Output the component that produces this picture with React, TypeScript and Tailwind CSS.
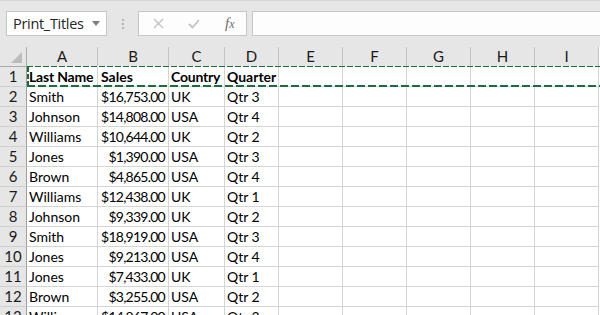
import React from "react";

const cols = ["A", "B", "C", "D", "E", "F", "G", "H", "I"];

const rows: [string, string, string, string][] = [
  ["Last Name", "Sales", "Country", "Quarter"],
  ["Smith", "$16,753.00", "UK", "Qtr 3"],
  ["Johnson", "$14,808.00", "USA", "Qtr 4"],
  ["Williams", "$10,644.00", "UK", "Qtr 2"],
  ["Jones", "$1,390.00", "USA", "Qtr 3"],
  ["Brown", "$4,865.00", "USA", "Qtr 4"],
  ["Williams", "$12,438.00", "UK", "Qtr 1"],
  ["Johnson", "$9,339.00", "UK", "Qtr 2"],
  ["Smith", "$18,919.00", "USA", "Qtr 3"],
  ["Jones", "$9,213.00", "USA", "Qtr 4"],
  ["Jones", "$7,433.00", "UK", "Qtr 1"],
  ["Brown", "$3,255.00", "USA", "Qtr 2"],
  ["Williams", "$14,867.00", "USA", "Qtr 3"],
];

const grid =
  "grid grid-cols-[27px_71px_71px_56px_54px_64px_64px_64px_64px_64px]";

function Toolbar() {
  return (
    <div className="h-[47px] bg-[#e6e6e6] border-t border-[#d4d4d4] flex items-start pt-[10px] pl-[6px]">
      {/* name box */}
      <div className="w-[101px] h-[25px] bg-white border border-[#c6c6c6] flex items-center pl-[6px] pr-[6px] justify-between">
        <span className="text-[14.5px] text-[#262626] font-['Open_Sans',sans-serif] tracking-[-0.3px]">
          Print_Titles
        </span>
        <svg width="8" height="5" viewBox="0 0 8 5">
          <path d="M0 0h8L4 5z" fill="#7f7f7f" />
        </svg>
      </div>
      {/* grip dots */}
      <div className="w-[31px] h-[25px] flex flex-col items-center justify-center gap-[2px]">
        <div className="w-[2px] h-[2px] bg-[#b4b4b4]" />
        <div className="w-[2px] h-[2px] bg-[#b4b4b4]" />
        <div className="w-[2px] h-[2px] bg-[#b4b4b4]" />
      </div>
      {/* cancel / enter / fx */}
      <div className="w-[109px] h-[25px] bg-[#fdfdfd] border border-[#c6c6c6] flex items-center">
        <svg width="11" height="11" viewBox="0 0 11 11" className="ml-[14px]">
          <path d="M1 1l9 9M10 1L1 10" stroke="#c3c3c3" strokeWidth="1.4" />
        </svg>
        <svg width="12" height="10" viewBox="0 0 12 10" className="ml-[24px]">
          <path d="M1 5l3.5 3.5L11 1" stroke="#c3c3c3" strokeWidth="1.8" fill="none" />
        </svg>
        <span className="ml-[25px] text-[15px] italic text-[#6d6d6d] font-['Liberation_Serif',serif] leading-none">
          f<span className="text-[12px]">x</span>
        </span>
      </div>
      {/* formula bar */}
      <div className="ml-[5px] flex-1 h-[25px] bg-[#fdfdfd] border border-[#c6c6c6] border-r-0" />
    </div>
  );
}

const cell = "h-5 border-r border-b border-[#d4d4d4] leading-[19px] whitespace-nowrap";

export default function App() {
  return (
    <div className="w-[600px] h-[315px] overflow-hidden bg-white font-['Lato',sans-serif] text-[14px] text-black">
      <Toolbar />
      <div className="relative">
        {/* column headers */}
        <div className={grid}>
          <div className="h-5 bg-[#e6e6e6] border-r border-b border-[#ababab] flex items-end justify-end pr-[4px] pb-[3px]">
            <svg width="11" height="11" viewBox="0 0 11 11">
              <path d="M11 0v11H0z" fill="#bcbcbc" />
            </svg>
          </div>
          {cols.map((c) => (
            <div
              key={c}
              className="h-5 bg-[#e6e6e6] border-r border-b border-r-[#c2c2c2] border-b-[#ababab] flex items-end justify-center leading-[19px] text-[15px] text-[#1a1a1a]"
            >
              {c}
            </div>
          ))}
        </div>
        {/* rows */}
        {rows.map((r, i) => (
          <div key={i} className={grid}>
            <div className="h-5 bg-[#e6e6e6] border-r border-b border-r-[#9e9e9e] border-b-[#cfcfcf] flex items-end justify-center leading-[19px] text-[15px] text-[#1a1a1a]">
              {i + 1}
            </div>
            <div className={`${cell} pl-[2px] ${i === 0 ? "font-bold tracking-[-0.2px]" : ""}`}>
              {r[0]}
            </div>
            {i === 0 ? (
              <div className={`${cell} pl-[3px] font-bold`}>{r[1]}</div>
            ) : (
              <div className={`${cell} flex justify-end pr-[3px] tracking-[-0.75px]`}>{r[1]}</div>
            )}
            <div className={`${cell} pl-[2px] ${i === 0 ? "font-bold tracking-[-0.2px]" : ""}`}>
              {r[2]}
            </div>
            <div className={`${cell} pl-[2px] ${i === 0 ? "font-bold" : ""}`}>
              {r[3]}
            </div>
            {[0, 1, 2, 3, 4].map((k) => (
              <div key={k} className="h-5 border-r border-b border-[#d4d4d4]" />
            ))}
          </div>
        ))}
        {/* print titles marquee */}
        <div className="absolute left-[27px] right-0 top-[19px] h-px bg-[repeating-linear-gradient(90deg,#1d6b40_0_6px,#ffffff_6px_8px)]" />
        <div className="absolute left-[27px] top-[20px] w-[2px] h-[19px] bg-[repeating-linear-gradient(180deg,#1d6b40_0_5px,#ffffff_5px_7px)]" />
        <div className="absolute left-[27px] right-0 top-[38px] h-[2px] bg-[repeating-linear-gradient(90deg,#1d6b40_0_8px,transparent_8px_11px)]" />
      </div>
    </div>
  );
}
